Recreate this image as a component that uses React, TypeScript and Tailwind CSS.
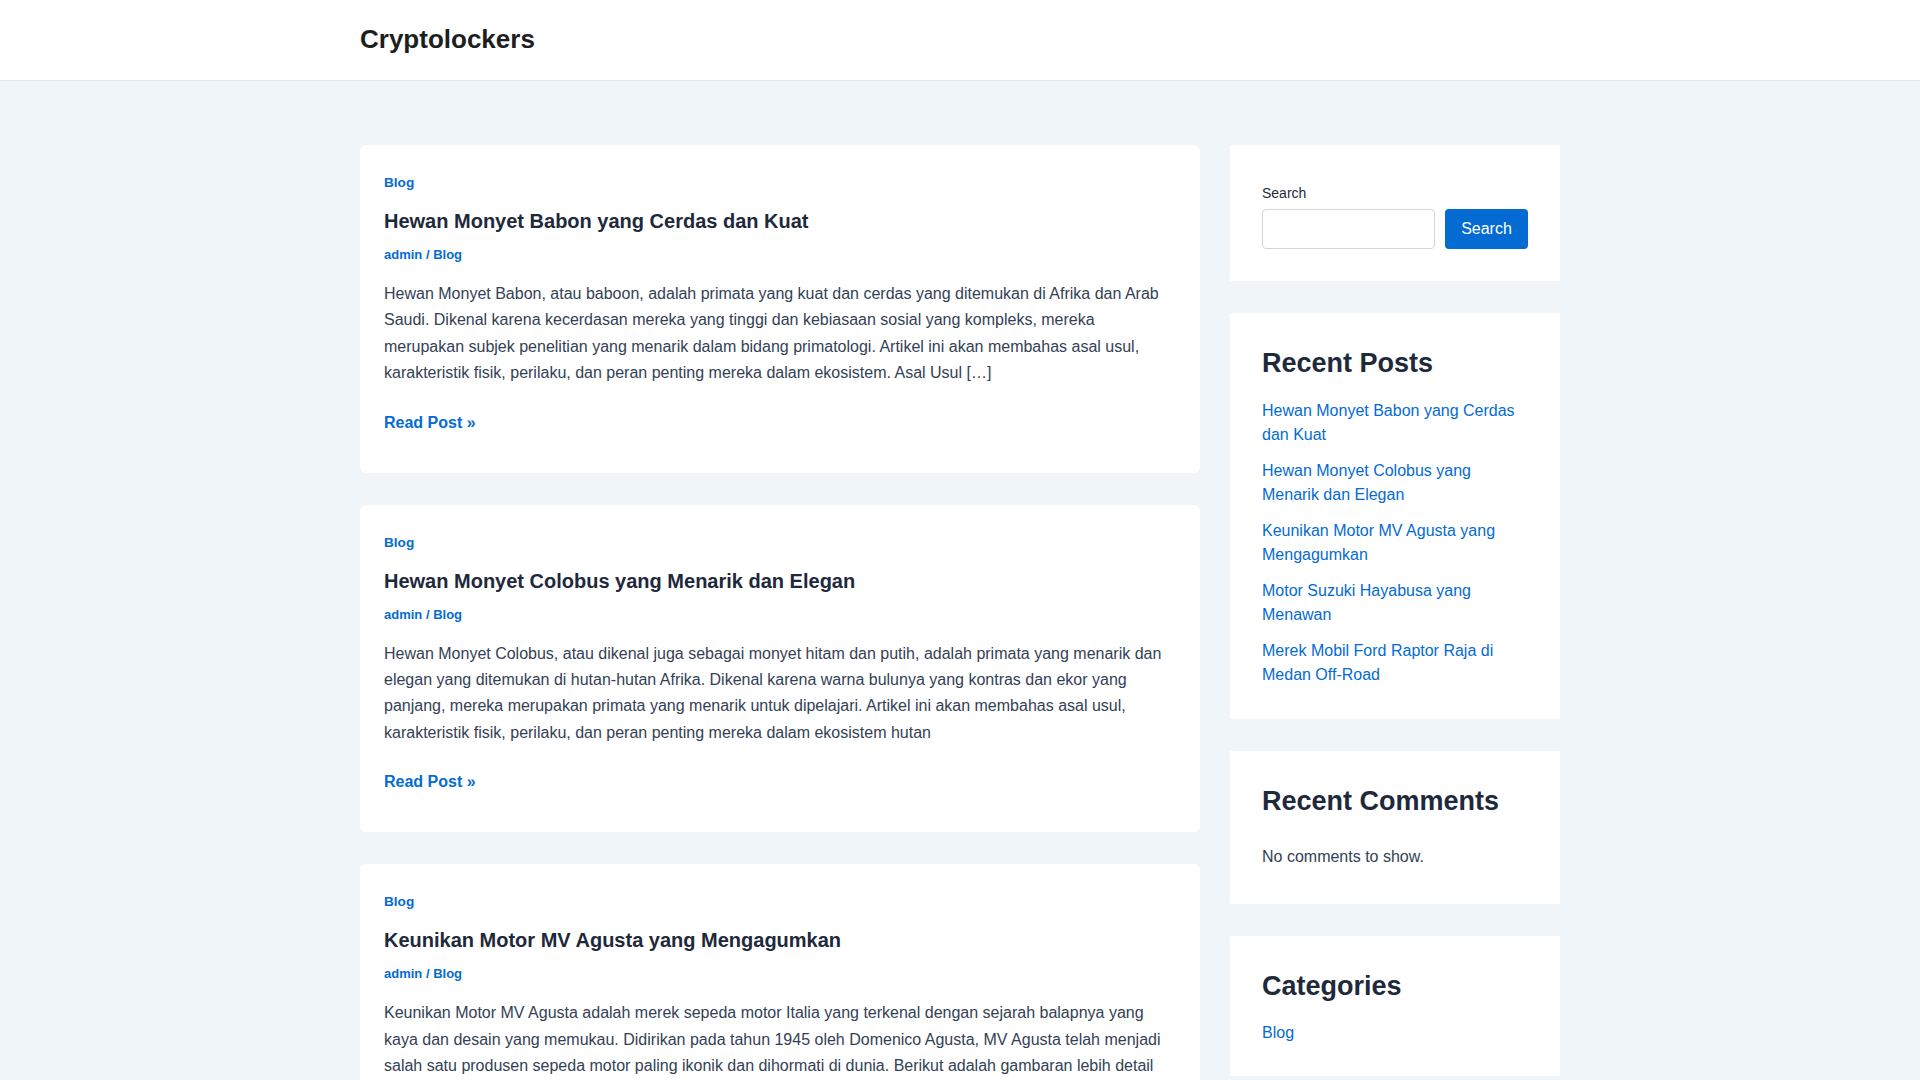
import React from "react";

const posts = [
  {
    title: "Hewan Monyet Babon yang Cerdas dan Kuat",
    excerpt:
      "Hewan Monyet Babon, atau baboon, adalah primata yang kuat dan cerdas yang ditemukan di Afrika dan Arab Saudi. Dikenal karena kecerdasan mereka yang tinggi dan kebiasaan sosial yang kompleks, mereka merupakan subjek penelitian yang menarik dalam bidang primatologi. Artikel ini akan membahas asal usul, karakteristik fisik, perilaku, dan peran penting mereka dalam ekosistem. Asal Usul […]",
  },
  {
    title: "Hewan Monyet Colobus yang Menarik dan Elegan",
    excerpt:
      "Hewan Monyet Colobus, atau dikenal juga sebagai monyet hitam dan putih, adalah primata yang menarik dan elegan yang ditemukan di hutan-hutan Afrika. Dikenal karena warna bulunya yang kontras dan ekor yang panjang, mereka merupakan primata yang menarik untuk dipelajari. Artikel ini akan membahas asal usul, karakteristik fisik, perilaku, dan peran penting mereka dalam ekosistem hutan",
  },
  {
    title: "Keunikan Motor MV Agusta yang Mengagumkan",
    excerpt:
      "Keunikan Motor MV Agusta adalah merek sepeda motor Italia yang terkenal dengan sejarah balapnya yang kaya dan desain yang memukau. Didirikan pada tahun 1945 oleh Domenico Agusta, MV Agusta telah menjadi salah satu produsen sepeda motor paling ikonik dan dihormati di dunia. Berikut adalah gambaran lebih detail tentang keunikan motor MV Agusta. Sejarah […]",
  },
];

const recent = [
  "Hewan Monyet Babon yang Cerdas dan Kuat",
  "Hewan Monyet Colobus yang Menarik dan Elegan",
  "Keunikan Motor MV Agusta yang Mengagumkan",
  "Motor Suzuki Hayabusa yang Menawan",
  "Merek Mobil Ford Raptor Raja di Medan Off-Road",
];

function PostCard({ title, excerpt }: { title: string; excerpt: string }) {
  return (
    <article className="bg-white rounded-[6px] px-[24px] pt-[27px] pb-[37px]">
      <div className="text-[13.6px] leading-[21px] font-bold text-[#046bd2]">
        <a href="#">Blog</a>
      </div>
      <h2 className="mt-[15px] text-[20px] leading-[26px] font-bold text-[#1e293b]">
        <a href="#">{title}</a>
      </h2>
      <div className="mt-[11px] text-[13px] leading-[19px] font-bold text-[#046bd2]">
        <a href="#">admin</a> / <a href="#">Blog</a>
      </div>
      <p className="mt-[17px] text-[16px] leading-[26.4px] text-[#334155]">{excerpt}</p>
      <div className="mt-[23px] text-[16px] leading-[26px] font-bold text-[#046bd2]">
        <a href="#">Read Post »</a>
      </div>
    </article>
  );
}

function WidgetTitle({ children }: { children: React.ReactNode }) {
  return (
    <h2 className="text-[27px] leading-[32px] font-bold text-[#1e293b]">{children}</h2>
  );
}

export default function App() {
  return (
    <div
      className="min-h-screen bg-[#f0f5fa]"
      style={{ fontFamily: '"Liberation Sans", Arial, Helvetica, sans-serif' }}
    >
      <header className="bg-white border-b border-[#e5e7eb] h-[81px]">
        <div className="w-[1200px] mx-auto h-[78px] flex items-center">
          <a href="#" className="text-[26px] leading-[32px] font-bold text-[#1e1e1e]">
            Cryptolockers
          </a>
        </div>
      </header>

      <div className="w-[1200px] mx-auto pt-[64px] pb-[60px] flex gap-[30px] items-start">
        <main className="w-[840px] flex flex-col gap-[32px]">
          {posts.map((p) => (
            <PostCard key={p.title} title={p.title} excerpt={p.excerpt} />
          ))}
        </main>

        <aside className="w-[330px] flex flex-col gap-[32px]">
          <section className="bg-white px-[32px] pt-[38px] pb-[32px]">
            <label className="block text-[14px] leading-[21px] text-[#1e293b]">Search</label>
            <div className="mt-[5px] flex gap-[10px]">
              <input
                type="text"
                className="flex-1 min-w-0 h-[40px] border border-[#d1d5db] rounded-[4px] bg-white px-3"
              />
              <button className="h-[40px] w-[83px] rounded-[4px] bg-[#046bd2] text-white text-[16px]">
                Search
              </button>
            </div>
          </section>

          <section className="bg-white px-[32px] pt-[34px] pb-[32px]">
            <WidgetTitle>Recent Posts</WidgetTitle>
            <ul className="mt-[20px] flex flex-col gap-[12px]">
              {recent.map((r) => (
                <li key={r} className="text-[16px] leading-[24px] text-[#046bd2]">
                  <a href="#">{r}</a>
                </li>
              ))}
            </ul>
          </section>

          <section className="bg-white px-[32px] pt-[34px] pb-[34px]">
            <WidgetTitle>Recent Comments</WidgetTitle>
            <p className="mt-[27px] text-[16px] leading-[26.4px] text-[#334155]">
              No comments to show.
            </p>
          </section>

          <section className="bg-white px-[32px] pt-[34px] pb-[31px]">
            <WidgetTitle>Categories</WidgetTitle>
            <ul className="mt-[19px]">
              <li className="text-[16px] leading-[24px] text-[#046bd2]">
                <a href="#">Blog</a>
              </li>
            </ul>
          </section>
        </aside>
      </div>
    </div>
  );
}
